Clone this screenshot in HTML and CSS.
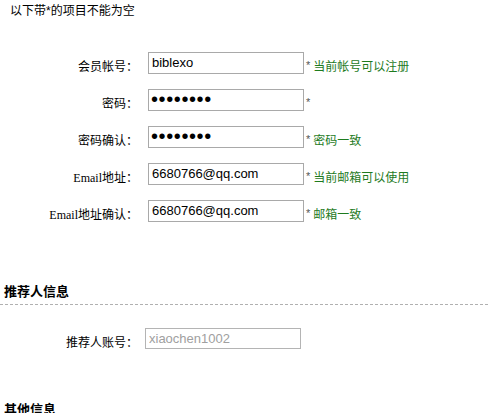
FILE: index.html
```html
<!DOCTYPE html>
<html lang="zh-CN">
<head>
    <meta charset="UTF-8">
    <title>会员注册</title>
    <link rel="stylesheet" href="styles.css">
</head>
<body>
    <div class="tip">以下带*的项目不能为空</div>

    <div class="form">
        <div class="row">
            <label class="label">会员帐号：</label>
            <input class="field" type="text" value="biblexo">
            <span class="star">*</span>
            <span class="msg">当前帐号可以注册</span>
        </div>
        <div class="row">
            <label class="label">密码：</label>
            <input class="field field-pwd" type="password" value="12345678">
            <span class="star">*</span>
            <span class="msg"></span>
        </div>
        <div class="row">
            <label class="label">密码确认：</label>
            <input class="field field-pwd" type="password" value="12345678">
            <span class="star">*</span>
            <span class="msg">密码一致</span>
        </div>
        <div class="row">
            <label class="label">Email地址：</label>
            <input class="field" type="text" value="6680766@qq.com">
            <span class="star">*</span>
            <span class="msg">当前邮箱可以使用</span>
        </div>
        <div class="row">
            <label class="label">Email地址确认：</label>
            <input class="field" type="text" value="6680766@qq.com">
            <span class="star">*</span>
            <span class="msg">邮箱一致</span>
        </div>
    </div>

    <h3 class="section-title">推荐人信息</h3>
    <div class="form form-ref">
        <div class="row">
            <label class="label">推荐人账号：</label>
            <input class="field field-disabled" type="text" value="xiaochen1002" disabled>
        </div>
    </div>

    <h3 class="section-title section-plain">其他信息</h3>
</body>
</html>
```

FILE: styles.css
```css
body {
    margin: 0;
    font-family: "Liberation Serif", "Noto Sans CJK SC", serif;
    font-size: 12px;
    color: #000;
    background-color: #fff;
}
.tip {
    padding: 4px 0 0 10px;
    line-height: 14px;
    font-family: "Liberation Sans", "Noto Sans CJK SC", sans-serif;
}
.form {
    padding-top: 26px;
}
.row {
    display: flex;
    align-items: center;
    height: 37px;
}
.label {
    width: 138px;
    padding-top: 6px;
    text-align: right;
    flex-shrink: 0;
}
.field {
    box-sizing: border-box;
    width: 156px;
    height: 22px;
    margin: 0 0 0 10px;
    padding: 1px 3px;
    border: 1px solid #a9a9a9;
    font-family: "Liberation Sans", Arial, sans-serif;
    font-size: 13px;
    color: #000;
    background-color: #fff;
    outline: none;
}
.field-pwd {
    padding: 0 2px;
    font-size: 20px;
    letter-spacing: 0.6px;
    line-height: 20px;
}
.star {
    margin-left: 2px;
    padding-top: 4px;
    color: #555;
    font-family: "Liberation Sans", sans-serif;
    font-size: 11px;
}
.msg {
    margin-left: 3px;
    padding-top: 6px;
    color: #1e7b1e;
    font-family: "Noto Sans CJK SC", sans-serif;
    font-size: 12px;
}
.section-title {
    margin: 54px 0 0;
    padding: 0 0 6px 4px;
    border-bottom: 1px dashed #b0b0b0;
    font-family: "Noto Sans CJK SC", sans-serif;
    font-size: 13px;
    line-height: 15px;
}
.section-plain {
    margin-top: 44px;
    border-bottom: none;
}
.form-ref {
    padding-top: 15px;
}
.form-ref .field {
    width: 156px;
    height: 21px;
    margin-left: 7px;
}
.field-disabled {
    color: #a0a0a0;
    border-color: #b4b4b4;
}
```
